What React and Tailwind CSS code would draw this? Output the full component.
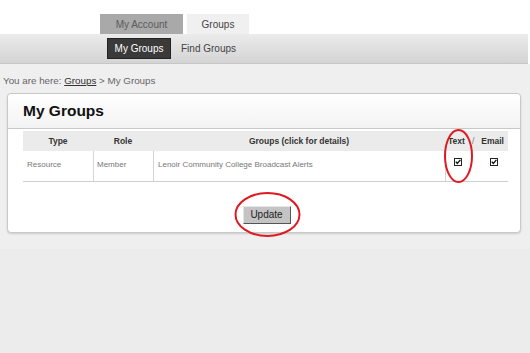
import React from 'react';

const Check = () => (
  <svg width="8" height="8" viewBox="0 0 8 8" className="block">
    <rect x="0.5" y="0.5" width="7" height="7" fill="#fff" stroke="#222" />
    <path d="M1.8 3.6 L3.3 5.4 L6.4 1.9" fill="none" stroke="#111" strokeWidth="1.4" />
  </svg>
);

export default function App() {
  return (
    <div className="relative w-[530px] h-[353px] overflow-hidden bg-[#ececec] font-['Liberation_Sans',Arial,sans-serif]">
      {/* top tabs */}
      <div className="bg-white pt-[14px] pl-[100px] flex gap-[4px]">
        <div className="w-[83px] h-[20px] bg-[#a9a9a9] text-[#5b5b5b] text-[10px] flex items-center justify-center">My Account</div>
        <div className="w-[62px] h-[20px] bg-[#f0f0f0] text-[#444] text-[10px] flex items-center justify-center">Groups</div>
      </div>

      {/* sub nav */}
      <div className="bg-white">
        <div className="mr-[2px] h-[30px] bg-gradient-to-b from-[#ebebeb] to-[#d4d4d4] border-b border-[#c6c6c6] flex items-center pl-[107px]">
          <div className="w-[64px] h-[21px] bg-[#3a3a3a] border border-[#222] text-white text-[10px] flex items-center justify-center">My Groups</div>
          <span className="ml-[10px] text-[#444] text-[10px]">Find Groups</span>
        </div>
      </div>

      {/* content */}
      <div className="bg-[#efefef] pt-[10px] pb-[16px]">
        <p className="pl-[3px] text-[9.8px] leading-[13px] text-[#666]">
          You are here: <span className="underline text-[#333]">Groups</span> &gt; My Groups
        </p>

        <div className="mt-[6px] ml-[7px] mr-[9px] bg-white border border-[#c9c9c9] rounded-[4px] shadow-[0_1px_2px_rgba(0,0,0,0.15)]">
          <div className="h-[35px] border-b border-[#c8c8c8] bg-gradient-to-b from-white to-[#f3f3f3] rounded-t-[4px] flex items-center pl-[15px]">
            <h1 className="text-[15.5px] font-bold text-[#111]">My Groups</h1>
          </div>

          <div className="ml-[15px] w-[485px] mt-[2px]">
            <div className="grid grid-cols-[70px_60px_292px_63px] h-[20px] bg-[#ebebeb] text-[8.5px] font-bold text-[#333] items-center">
              <div className="text-center">Type</div>
              <div className="text-center">Role</div>
              <div className="text-center">Groups (click for details)</div>
              <div className="flex items-center pl-[3px] pr-[4px] justify-between">
                <span>Text</span>
                <span className="font-normal text-[#777]">/</span>
                <span>Email</span>
              </div>
            </div>
            <div className="grid grid-cols-[70px_60px_292px_63px] h-[31px] border-b border-[#cfcfcf] text-[8px] text-[#777]">
              <div className="pl-[4px] pt-[8px]">Resource</div>
              <div className="border-l border-[#d4d4d4] pl-[3px] pt-[8px]">Member</div>
              <div className="border-l border-[#d4d4d4] pl-[4px] pt-[8px]">Lenoir Community College Broadcast Alerts</div>
              <div className="border-l border-[#d4d4d4] flex pt-[7px] pl-[8px] gap-[28px]">
                <Check />
                <Check />
              </div>
            </div>
          </div>

          <div className="flex justify-center pl-[5px] pt-[24px] pb-[8px]">
            <button className="w-[48px] h-[18px] bg-[#c4c4c4] border border-t-[#e6e6e6] border-l-[#e6e6e6] border-r-[#555] border-b-[#555] text-[10px] text-[#222] leading-none">Update</button>
          </div>
        </div>
      </div>

      {/* annotation circles */}
      <svg className="absolute inset-0 pointer-events-none" width="530" height="353">
        <ellipse cx="458.5" cy="156" rx="13.5" ry="26" fill="none" stroke="#e01820" strokeWidth="2" />
        <ellipse cx="267.5" cy="214.5" rx="32" ry="21.5" fill="none" stroke="#e01820" strokeWidth="2" />
      </svg>
    </div>
  );
}
